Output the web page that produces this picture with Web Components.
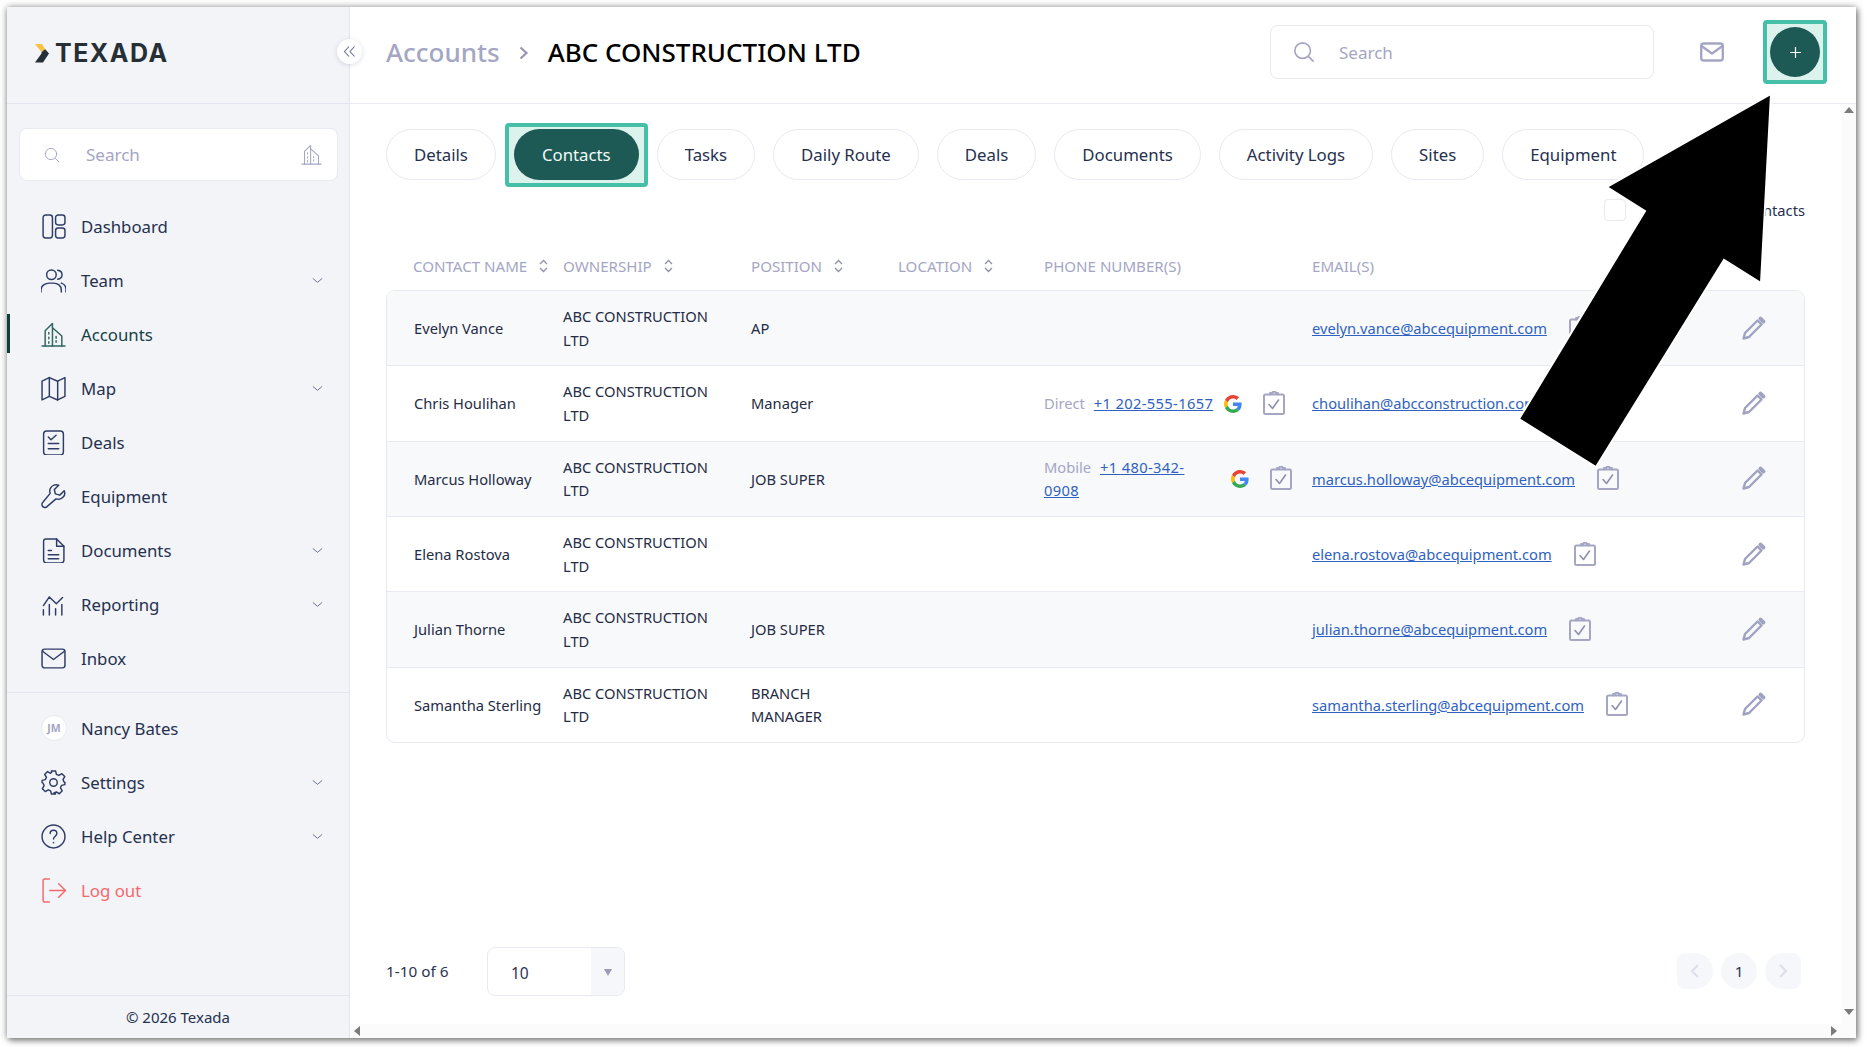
<!DOCTYPE html>
<html>
<head>
<meta charset="utf-8">
<title>Contacts</title>
<style>
html,body{margin:0;padding:0;height:100%;background:#fff;}
body{font-family:"Noto Sans",sans-serif;color:#26304f;overflow:hidden;}
</style>
</head>
<body>
<tx-window>
	<tx-sidebar slot="side"></tx-sidebar>
	<tx-topbar slot="top"></tx-topbar>
	<tx-tabs slot="main"></tx-tabs>
	<tx-contacts slot="main"></tx-contacts>
	<tx-pager slot="foot"></tx-pager>
</tx-window>
<script>
'use strict';

const svg = (body,size=24,extra='')=>`<svg width="${size}" height="${size}" viewBox="0 0 24 24" fill="none" stroke="currentColor" stroke-width="1.4" stroke-linecap="round" stroke-linejoin="round" ${extra}>${body}</svg>`;

const icons = {
	dashboard:'<rect x="2" y="1" width="9" height="22" rx="2.5"/><rect x="14" y="1" width="9" height="9.500" rx="2.500"/><rect x="14" y="13.500" width="9" height="9.500" rx="2.500"/>',
	team:'<circle cx="10" cy="6.500" r="4.600"/><path d="M0 23v-2c0-4 4-6.500 8-6.500h4c4 0 7.500 2.500 7.500 6.500v2"/><path d="M16 2.200c2.600.3 4.200 2.200 4.200 4.300s-1.600 4-4.200 4.300"/><path d="M19.500 14.500c2.500.8 4.500 3 4.500 6v2.500"/>',
	building:'<path d="M1 23h22"/><path d="M4 23V8.500L11 1.500V23"/><path d="M11 5.500l9 8V23"/><path d="M7.500 10v1.500M7.500 14.500V16M7.500 19v1.500M14.500 14v1.500M14.500 18v1.500"/>',
	map:'<path d="M1 5l7-3.500 8 3.500 7-3.500v18l-7 3.500-8-3.500-7 3.500z"/><path d="M8 1.500v18M16 5v18"/>',
	deals:'<rect x="2.500" y="1" width="19" height="23" rx="3"/><path d="M7 6.800l2.600 2.500L14.500 5M7 13h10M7 18h10"/>',
	wrench:'<path d="M22.300 6.500l-4.300 4.200-4.200-1.200-1-4.200L17 1.200c-3-1.200-6.500 0-8 3-.8 1.600-.7 3.300-.2 4.800L1.800 17.500c-1.300 1.300-1.300 3 0 4.200s3 1.100 4.200-.2l8.400-7.200c1.600.5 3.300.5 4.800-.3 3-1.500 4.200-4.500 3.100-7.500z"/>',
	doc:'<path d="M4.500 1h10.500l7 7v13c0 1.700-1.300 3-3 3H5.500c-1.700 0-3-1.300-3-3V3c0-1.200.9-2 2-2z"/><path d="M15 1v7h7"/><path d="M7 12h3M7 16h10M7 20h10"/>',
	reporting:'<path d="M2.300 13L8 4.700l6.700 6.600 6-6"/><path d="M2.300 17v5M8 12v10M14 16v6M20 12v10"/>',
	mail:'<rect x="1" y="3" width="22" height="18" rx="2.500"/><path d="M1.500 5L12 13l10.500-8"/>',
	gear:'<circle cx="12" cy="12" r="3.600"/><path d="M10 1h4l.8 3.200 2.300 1 2.900-1.700 2.800 2.800-1.700 2.900 1 2.300L23 12v0l-.1 2-3.200.8-1 2.300 1.700 2.900-2.800 2.800-2.900-1.700-2.200 1L14 23h-4l-.8-3-2.200-1-2.900 1.700-2.800-2.800L3 15l-1-2.300L1 12l.1-2 3.100-.8 1-2.300L3.500 4.300 6.300 1.500 9.200 3.200l1-1z"/>',
	help:'<circle cx="12" cy="12" r="11"/><path d="M8.800 9.200c0-1.800 1.400-3.200 3.200-3.200s3.200 1.300 3.200 3c0 2.600-3.200 2.900-3.200 5.400"/><path d="M12 17.800v.2"/>',
	logout:'<path d="M8 1H3.500C2.500 1 2 1.600 2 2.500v19c0 .9.500 1.500 1.500 1.500H8"/><path d="M8.500 12H23M17 5.500l6.500 6.500-6.500 6.500"/>',
	search:'<circle cx="10.500" cy="10.500" r="8.500"/><path d="M17 17l5 5"/>',
	chevron:'<path d="M5 9l7 6 7-6"/>',
	pencil:'<path d="M1.500 22.500L3 17 15.500 4.500l4 4L7 21z" stroke-width="2.400"/><path d="M18.500 2.700l2.800 2.800" stroke-width="4"/>',
	clipboard:'<rect x="2" y="3.500" width="20" height="19.500" rx="1.500" stroke-width="2"/><path d="M8 3.500V2h2.500V.9h3V2H16v1.500" stroke-width="1.800"/><path d="M7 13.500l3.500 4 6-8.500" stroke-width="1.600" stroke="#8d90ad"/>',
};

class TxWindow extends HTMLElement {
	constructor(){
		super();
		this.attachShadow({mode:'open'});
		this.shadowRoot.innerHTML = `<style>
:host{display:flex;box-sizing:border-box;width:1867px;height:1049px;padding:7px 11px 11px 7px;}
.frame{position:relative;flex:1;display:flex;background:#fff;box-shadow:0 0 7px rgba(0,0,0,.4),2px 3px 6px rgba(0,0,0,.35);min-width:0;}
.side{flex:0 0 343px;display:flex;}
.right{flex:1;display:flex;flex-direction:column;min-width:0;}
.body{flex:1;display:flex;min-height:0;}
.main{flex:1;display:flex;flex-direction:column;padding:25px 37px 0 36px;min-width:0;}
.main ::slotted(tx-contacts){flex:1;}
.vbar{flex:0 0 14px;background:#fbfbfb;display:flex;flex-direction:column;justify-content:space-between;align-items:center;padding:3px 0 9px;}
.hbar{flex:0 0 14px;background:#fbfbfb;display:flex;justify-content:space-between;align-items:center;padding:0 19px 0 4px;}
.tri{width:0;height:0;border:solid transparent;}
.tu{border-width:0 5px 6px;border-bottom-color:#7b7b7b;}
.td{border-width:6px 5px 0;border-top-color:#7b7b7b;}
.tl{border-width:5px 6px 5px 0;border-right-color:#7b7b7b;}
.tr{border-width:5px 0 5px 6px;border-left-color:#7b7b7b;}
.arrow{position:absolute;left:0;top:0;overflow:visible;pointer-events:none;}
</style>
<div class="frame">
	<div class="side"><slot name="side"></slot></div>
	<div class="right">
		<slot name="top"></slot>
		<div class="body">
			<div class="main"><slot name="main"></slot><slot name="foot"></slot></div>
			<div class="vbar"><span class="tri tu"></span><span class="tri td"></span></div>
		</div>
		<div class="hbar"><span class="tri tl"></span><span class="tri tr"></span></div>
	</div>
	<svg class="arrow" width="1849" height="1031" viewBox="7 7 1849 1031"><polygon points="1771,94 1607,187 1645,211 1519,419 1596,467 1724,260 1761,283" fill="#000" stroke="#fff" stroke-width="2"/></svg>
</div>`;
	}
}

class TxNavItem extends HTMLElement {
	constructor(){
		super();
		this.attachShadow({mode:'open'});
	}
	connectedCallback(){
		let icon = this.getAttribute('icon');
		let arrow = this.hasAttribute('arrow') ? `<span class="chev">${svg(icons.chevron,15)}</span>` : '';
		this.shadowRoot.innerHTML = `<style>
:host{display:flex;align-items:center;height:54px;padding:0 24px 0 34px;color:#26304f;font-size:16.800px;position:relative;}
:host([active]){color:#173f45;}
:host([active])::before{content:'';position:absolute;left:0;top:7px;bottom:8px;width:3px;background:#0f3f3c;}
:host([danger]){color:#f4686c;}
.ic{width:40px;flex:none;display:flex;color:#2f3c66;}
:host([active]) .ic{color:#2f6660;}
:host([danger]) .ic{color:#f4686c;}
.avatar{width:26px;height:26px;border-radius:50%;background:#fff;border:1px solid #e9ebf2;color:#a4a6c4;font-size:10.500px;font-weight:700;display:flex;align-items:center;justify-content:center;box-sizing:border-box;}
.t{flex:1;}
.chev{display:flex;color:#5a6488;}
</style>
<span class="ic">${icon==='avatar' ? '<span class="avatar">JM</span>' : svg(icons[icon],25)}</span>
<span class="t"><slot></slot></span>${arrow}`;
	}
}

class TxSidebar extends HTMLElement {
	constructor(){
		super();
		this.attachShadow({mode:'open'});
		this.shadowRoot.innerHTML = `<style>
:host{display:flex;flex-direction:column;width:343px;box-sizing:border-box;background:#f2f4f8;border-right:1px solid #e4e6ef;position:relative;}
.logo{height:97px;flex:none;box-sizing:border-box;border-bottom:1px solid #e4e6ef;display:flex;align-items:center;padding:0 0 3px 28px;gap:5px;}
.logo b{font:700 25px/1 Inter,"Liberation Sans",sans-serif;color:#262e36;letter-spacing:1.500px;}
.collapse{position:absolute;right:-13px;top:32px;width:25px;height:25px;border-radius:50%;background:#fff;box-shadow:0 1px 5px rgba(60,70,100,.18);display:flex;align-items:center;justify-content:center;color:#6a7390;z-index:2;}
.search{margin:24px 11px 18px 12px;height:53px;box-sizing:border-box;background:#fff;border:1px solid #e8eaf1;border-radius:8px;display:flex;align-items:center;padding:0 15px 0 24px;color:#a4a6c4;font-size:17px;}
.search span{flex:1;margin-left:26px;}
.group{border-bottom:1px solid #e4e6ef;padding-bottom:7px;}
.group2{flex:1;padding-top:8px;}
.foot{height:43px;flex:none;box-sizing:border-box;border-top:1px solid #e4e6ef;display:flex;align-items:center;justify-content:center;font-size:15px;color:#26304f;}
</style>
<div class="logo">
	<svg width="15" height="19" viewBox="0 0 15 19"><path d="M6.500 8L10 5l4 4.500L8 18.500H0l6.500-9z" fill="#262e36"/><path d="M0 0h7l3 5-3.500 3z" fill="#f6c343"/></svg>
	<b>TEXADA</b>
</div>
<div class="collapse"><svg width="13" height="13" viewBox="0 0 13 13" fill="none" stroke="currentColor" stroke-width="1.100"><path d="M6 1.500L1.500 6.500 6 11.500M11.500 1.500L7 6.500l4.500 5"/></svg></div>
<div class="search">${svg(icons.search,16)}<span>Search</span>${svg(icons.building,21,'style="stroke-width:1.200"')}</div>
<div class="group">
	<tx-nav-item icon="dashboard">Dashboard</tx-nav-item>
	<tx-nav-item icon="team" arrow>Team</tx-nav-item>
	<tx-nav-item icon="building" active>Accounts</tx-nav-item>
	<tx-nav-item icon="map" arrow>Map</tx-nav-item>
	<tx-nav-item icon="deals">Deals</tx-nav-item>
	<tx-nav-item icon="wrench">Equipment</tx-nav-item>
	<tx-nav-item icon="doc" arrow>Documents</tx-nav-item>
	<tx-nav-item icon="reporting" arrow>Reporting</tx-nav-item>
	<tx-nav-item icon="mail">Inbox</tx-nav-item>
</div>
<div class="group2">
	<tx-nav-item icon="avatar">Nancy Bates</tx-nav-item>
	<tx-nav-item icon="gear" arrow>Settings</tx-nav-item>
	<tx-nav-item icon="help" arrow>Help Center</tx-nav-item>
	<tx-nav-item icon="logout" danger>Log out</tx-nav-item>
</div>
<div class="foot">© 2026 Texada</div>`;
	}
}

class TxTopbar extends HTMLElement {
	constructor(){
		super();
		this.attachShadow({mode:'open'});
		this.shadowRoot.innerHTML = `<style>
:host{display:flex;align-items:center;height:97px;flex:none;box-sizing:border-box;border-bottom:1px solid #e8e9f1;padding:0 29px 6px 36px;}
.crumb{flex:1;display:flex;align-items:center;font-size:26px;font-weight:500;color:#000;}
.crumb a{color:#a4a6c4;}
.crumb svg{margin:2px 18px 0 18px;color:#9497b4;}
.search{width:384px;height:54px;box-sizing:border-box;border:1px solid #e8e9f1;border-radius:8px;display:flex;align-items:center;padding-left:22px;color:#a4a6c4;font-size:17px;}
.search span{margin-left:24px;}
.search svg{stroke-width:1.800;}
.mail{margin:0 39px 0 46px;display:flex;color:#a4a6c4;}
.plusring{width:64px;height:64px;box-sizing:border-box;border:4px solid #45bfa8;background:#dcf2ed;border-radius:4px;display:flex;align-items:center;justify-content:center;}
.plus{width:50px;height:50px;border-radius:50%;background:#1d5a55;display:flex;align-items:center;justify-content:center;color:#fff;}
</style>
<div class="crumb"><a>Accounts</a><svg width="12" height="16" viewBox="0 0 12 16" fill="none" stroke="currentColor" stroke-width="2.200"><path d="M2.500 2.500l6 5.500-6 5.500"/></svg><span>ABC CONSTRUCTION LTD</span></div>
<div class="search">${svg(icons.search,22)}<span>Search</span></div>
<span class="mail">${svg('<rect x="1.200" y="3.500" width="21.600" height="17" rx="2.500"/><path d="M1.500 6L12 13.500 22.500 6"/>',24,'style="stroke-width:2.400"')}</span>
<div class="plusring"><div class="plus"><svg width="13" height="13" viewBox="0 0 13 13" stroke="currentColor" stroke-width="1.200"><path d="M6.500 1v11M1 6.500h11"/></svg></div></div>`;
	}
}

class TxTabs extends HTMLElement {
	constructor(){
		super();
		this.attachShadow({mode:'open'});
		let tabs = ['Details','Contacts','Tasks','Daily Route','Deals','Documents','Activity Logs','Sites','Equipment'];
		this.shadowRoot.innerHTML = `<style>
:host{display:flex;align-items:center;gap:18px;height:51px;flex:none;font-size:16.800px;color:#26304f;}
.tab{height:51px;box-sizing:border-box;border:1px solid #e8e9f1;border-radius:26px;padding:0 27px;display:flex;align-items:center;white-space:nowrap;}
.ring{box-sizing:border-box;height:64px;margin:0 -9px;border:4px solid #45bfa8;background:#dcf2ed;border-radius:4px;padding:0 5px;display:flex;align-items:center;}
.ring .tab{background:#1d5a55;color:#f1fbf8;border:0;padding:0 28px;}
</style>
${tabs.map(t=> t==='Contacts' ? `<div class="ring"><div class="tab">${t}</div></div>` : `<div class="tab">${t}</div>`).join('')}`;
	}
}

const G_ICON = `<svg class="g" width="18" height="18" viewBox="0 0 48 48"><path fill="#EA4335" d="M24 9.500c3.500 0 6.700 1.200 9.200 3.600l6.900-6.900C35.900 2.400 30.500 0 24 0 14.600 0 6.500 5.400 2.600 13.200l8 6.200C12.400 13.700 17.700 9.500 24 9.500z"/><path fill="#4285F4" d="M47 24.500c0-1.600-.1-3.100-.4-4.500H24v9h13c-.6 3-2.300 5.500-4.800 7.200l7.700 6c4.500-4.200 7.100-10.300 7.100-17.700z"/><path fill="#FBBC05" d="M10.500 28.600c-.5-1.400-.8-3-.8-4.600s.3-3.200.8-4.600l-8-6.200C.9 16.400 0 20.100 0 24s.9 7.600 2.600 10.800z"/><path fill="#34A853" d="M24 48c6.500 0 11.900-2.100 15.900-5.800l-7.700-6c-2.200 1.400-4.900 2.300-8.200 2.300-6.300 0-11.600-4.200-13.500-9.900l-8 6.200C6.500 42.600 14.600 48 24 48z"/></svg>`;

const CONTACTS = [
	{name:'Evelyn Vance',pos:'AP',email:'evelyn.vance@abcequipment.com'},
	{name:'Chris Houlihan',pos:'Manager',type:'Direct',phone:'+1 202-555-1657',w:170,email:'choulihan@abcconstruction.com'},
	{name:'Marcus Holloway',pos:'JOB SUPER',type:'Mobile',phone:'+1 480-342-<br>0908',w:177,email:'marcus.holloway@abcequipment.com'},
	{name:'Elena Rostova',pos:'',email:'elena.rostova@abcequipment.com'},
	{name:'Julian Thorne',pos:'JOB SUPER',email:'julian.thorne@abcequipment.com'},
	{name:'Samantha Sterling',pos:'BRANCH MANAGER',email:'samantha.sterling@abcequipment.com'},
];

class TxContacts extends HTMLElement {
	constructor(){
		super();
		this.attachShadow({mode:'open'});
		let sort = `<svg class="sort" width="9" height="14" viewBox="0 0 9 14" fill="none" stroke="#8f92ad" stroke-width="1.300"><path d="M1 5l3.500-3.500L8 5M1 9l3.500 3.500L8 9"/></svg>`;
		let check = svg(icons.clipboard,24,'class="clip"');
		let rows = CONTACTS.map(c=>{
			let phone = c.phone
				? `<span class="ph"><span style="width:${c.w}px"><span class="lbl">${c.type}</span> <a>${c.phone}</a></span>${G_ICON}${check}</span>`
				: '';
			return `<div class="row">
	<div class="c first">${c.name}</div>
	<div class="c">ABC CONSTRUCTION LTD</div>
	<div class="c">${c.pos}</div>
	<div class="c"></div>
	<div class="c ph-cell">${phone}</div>
	<div class="c mailc"><a>${c.email}</a>${check}</div>
	<div class="c edit">${svg(icons.pencil,24)}</div>
</div>`;
		}).join('');
		this.shadowRoot.innerHTML = `<style>
:host{display:block;font-size:14.700px;color:#252c45;}
.filter{display:flex;align-items:center;justify-content:flex-end;height:22px;margin-top:19px;gap:14px;color:#26304f;}
.filter span:last-child{width:165px;white-space:nowrap;display:flex;justify-content:flex-end;}
.box{width:22px;height:22px;box-sizing:border-box;border:1px solid #e8e9f1;border-radius:4px;}
.head{display:grid;grid-template-columns:177px 188px 147px 146px 268px 1fr 100px;}
.row{display:grid;grid-template-columns:176px 188px 147px 146px 268px 1fr 100px;}
.head{height:69px;box-sizing:border-box;padding-top:20px;align-items:center;color:#a4a6c4;font-size:15.100px;}
.head div{display:flex;align-items:center;gap:12px;white-space:nowrap;}
.head .first{padding-left:27px;}
.card{border:1px solid #e8e9f1;border-radius:9px;overflow:hidden;}
.row{height:75.330px;align-items:center;border-bottom:1px solid #e8e9f1;box-sizing:border-box;padding-top:1px;}
.row:last-child{border-bottom:0;height:74.500px;}
.row:nth-child(odd){background:#f8f9fb;}
.c{line-height:23.500px;padding-right:30px;}
.first{padding-left:27px;padding-right:0;}
a{color:#2f62c0;text-decoration:underline;}
.lbl{color:#a4a6c4;margin-right:5px;}
.ph{display:flex;align-items:center;}
.ph-cell{padding-right:0;}
.ph a{letter-spacing:.36px;}
.ph > span{flex:none;}
.g{flex:none;margin-left:10px;margin-right:20px;}
.mailc{display:flex;align-items:center;gap:21px;padding-right:0;white-space:nowrap;}
.clip{color:#a4a6c4;flex:none;margin-top:-2px;}
.edit{display:flex;justify-content:center;color:#9fa2c0;padding:0;margin-top:-2px;}
</style>
<div class="filter"><span class="box"></span><span>Show inactive contacts</span></div>
<div class="head">
	<div class="first">CONTACT NAME ${sort}</div><div>OWNERSHIP ${sort}</div><div>POSITION ${sort}</div><div>LOCATION ${sort}</div><div>PHONE NUMBER(S)</div><div>EMAIL(S)</div><div></div>
</div>
<div class="card">${rows}</div>`;
	}
}

class TxPager extends HTMLElement {
	constructor(){
		super();
		this.attachShadow({mode:'open'});
		this.shadowRoot.innerHTML = `<style>
:host{display:flex;align-items:center;flex:none;height:50px;margin-bottom:28px;font-size:15.300px;color:#2a3454;}
.count{width:101px;}
.sel{width:138px;height:49px;box-sizing:border-box;border:1px solid #e8e9f1;border-radius:8px;display:flex;overflow:hidden;font-size:15.500px;}
.sel span{flex:1;padding:3px 0 0 23px;display:flex;align-items:center;}
.sel i{width:33px;background:#f6f7fa;display:flex;align-items:center;justify-content:center;padding-top:3px;box-sizing:border-box;}
.sel i::before{content:'';border:solid transparent;border-width:7px 4.500px 0;border-top-color:#9a9cb8;}
.pages{margin-left:auto;margin-right:4px;display:flex;gap:8px;}
.pg{width:36px;height:36px;border-radius:50%;background:#f6f7fa;display:flex;align-items:center;justify-content:center;color:#dcdeea;}
.pg.n{color:#2a3454;}
.pg.p{border-radius:8px 50% 50% 8px;}
.pg.x{border-radius:50% 8px 8px 50%;}
</style>
<span class="count">1-10 of 6</span>
<div class="sel"><span>10</span><i></i></div>
<div class="pages">
	<div class="pg p"><svg width="12" height="16" viewBox="0 0 12 16" fill="none" stroke="currentColor" stroke-width="2.200"><path d="M9 2L3 8l6 6"/></svg></div>
	<div class="pg n">1</div>
	<div class="pg x"><svg width="12" height="16" viewBox="0 0 12 16" fill="none" stroke="currentColor" stroke-width="2.200"><path d="M3 2l6 6-6 6"/></svg></div>
</div>`;
	}
}

customElements.define('tx-window',TxWindow);
customElements.define('tx-nav-item',TxNavItem);
customElements.define('tx-sidebar',TxSidebar);
customElements.define('tx-topbar',TxTopbar);
customElements.define('tx-tabs',TxTabs);
customElements.define('tx-contacts',TxContacts);
customElements.define('tx-pager',TxPager);
</script>
</body>
</html>
